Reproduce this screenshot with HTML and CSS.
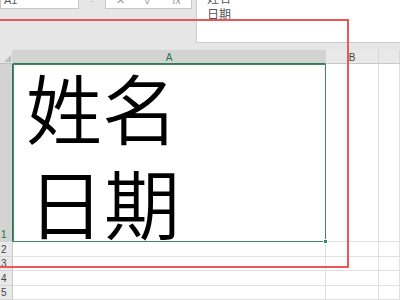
FILE: index.html
```html
<!DOCTYPE html>
<html>
<head>
<meta charset="utf-8">
<link rel="stylesheet" href="styles.css">
</head>
<body>
<div class="app">
  <div class="topbar">
    <div class="left-tools">
      <div class="namebox">A1</div>
      <div class="dots">⋮</div>
      <div class="fxbox"><span>✕</span><span>✓</span><span class="fx">fx</span></div>
    </div>
    <div class="formula">
      <div class="fline">姓名</div>
      <div class="fline">日期</div>
    </div>
  </div>
  <div class="sheet">
    <div class="corner"><div class="tri"></div></div>
    <div class="colh sel">A</div>
    <div class="colh">B</div>
    <div class="colh"></div>
    <div class="rowh sel r1">1</div>
    <div class="cell a1"><div class="big">姓名</div><div class="big second">日期</div><div class="handle"></div></div>
    <div class="cell"></div>
    <div class="cell"></div>
    <div class="rowh">2</div><div class="cell"></div><div class="cell"></div><div class="cell"></div>
    <div class="rowh">3</div><div class="cell"></div><div class="cell"></div><div class="cell"></div>
    <div class="rowh">4</div><div class="cell"></div><div class="cell"></div><div class="cell"></div>
    <div class="rowh">5</div><div class="cell"></div><div class="cell"></div><div class="cell"></div>
  </div>
  <div class="redbox"></div>
</div>
</body>
</html>
```
FILE: styles.css
```css
* { box-sizing: border-box; }
html, body { margin: 0; padding: 0; }
body { width: 400px; height: 300px; overflow: hidden; background: #e6e6e6; font-family: "Liberation Sans", "Noto Sans CJK SC", sans-serif; }
.app { position: relative; width: 400px; height: 300px; overflow: hidden; }
.topbar { height: 50px; display: flex; background: #e6e6e6; }
.left-tools { width: 196px; display: flex; align-items: flex-start; }
.namebox { width: 79px; height: 9px; background: #fff; border: 1px solid #c8c8c8; border-top: none; font-size: 11px; line-height: 0; color: #555; padding-left: 3px; overflow: hidden; }
.dots { width: 26px; text-align: center; font-size: 10px; line-height: 4px; color: #999; overflow: hidden; }
.fxbox { width: 87px; height: 9px; background: #fff; border: 1px solid #c8c8c8; border-top: none; display: flex; justify-content: space-around; font-size: 11px; color: #999; overflow: hidden; align-items: flex-start; }
.fxbox span { display: block; margin-top: -5px; line-height: 10px; }
.fx { font-style: italic; }
.formula { flex: 1; height: 43px; background: #fff; border-left: 1px solid #d0d0d0; border-bottom: 1px solid #c8c8c8; padding: 0 0 0 10px; overflow: hidden; }
.fline { font-family: "Noto Sans CJK SC", sans-serif; font-size: 12px; line-height: 16px; color: #555; }
.fline:first-child { margin-top: -10px; }
.sheet { display: grid; grid-template-columns: 13px 313px 53px 21px; grid-template-rows: 14px 178px 15px 14px 15px 14px; background: #fff; }
.corner { background: #e6e6e6; border-right: 1px solid #d0d0d0; border-bottom: 1px solid #c0c0c0; position: relative; }
.tri { position: absolute; right: 1px; bottom: 1px; width: 0; height: 0; border-left: 7px solid transparent; border-bottom: 7px solid #bdbdbd; }
.colh { background: #e9e9e9; border-right: 1px solid #d6d6d6; border-bottom: 1px solid #c8c8c8; font-size: 10px; color: #444; text-align: center; line-height: 16px; }
.colh.sel { background: #d3d3d3; color: #217346; border-bottom: 1px solid #2e7d57; }
.rowh { background: #e9e9e9; border-right: 1px solid #c8c8c8; border-bottom: 1px solid #d6d6d6; font-size: 10px; color: #444; display: flex; align-items: flex-end; padding-left: 1px; line-height: 13px; }
.rowh.sel { background: #d3d3d3; color: #217346; border-right: 1px solid #2e7d57; }
.cell { border-right: 1px solid #e0e0e0; border-bottom: 1px solid #e0e0e0; background: #fff; }
.a1 { position: relative; border: 1px solid #3f8760; }
.big { font-family: "Noto Sans CJK SC", sans-serif; font-weight: 350; font-size: 76px; line-height: 95px; color: #000; padding-left: 12px; margin-top: -6px; white-space: nowrap; }
.big.second { padding-left: 14px; margin-top: 0; }
.handle { position: absolute; right: -3px; bottom: -3px; width: 5px; height: 5px; background: #3f8760; border: 1px solid #fff; }
.redbox { position: absolute; left: -4px; top: 19px; width: 353px; height: 249px; border: 2px solid #e8585a; }
```
